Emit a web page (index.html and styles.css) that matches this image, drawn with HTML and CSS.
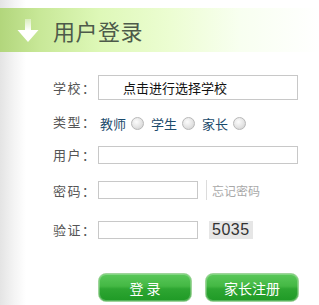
FILE: index.html
```html
<!DOCTYPE html>
<html lang="zh">
<head>
<meta charset="utf-8">
<link rel="stylesheet" href="styles.css">
</head>
<body>
<div class="page">
  <div class="header">
    <svg class="arrow" width="22" height="24" viewBox="0 0 22 24">
      <defs>
        <linearGradient id="ag" x1="0" y1="0" x2="0" y2="1">
          <stop offset="0" stop-color="#ffffff" stop-opacity="0.4"/>
          <stop offset="0.5" stop-color="#ffffff"/>
          <stop offset="1" stop-color="#ffffff"/>
        </linearGradient>
      </defs>
      <path d="M8 0 H14 V11 H21.5 L11 23 L0.5 11 H8 Z" fill="url(#ag)"/>
    </svg>
    <h1 class="title">用户登录</h1>
  </div>
  <div class="form">
    <div class="row row-school">
      <span class="label">学校：</span>
      <div class="input wide school">点击进行选择学校</div>
    </div>
    <div class="row row-type">
      <span class="label">类型：</span>
      <div class="types">
        <span class="opt">教师</span><span class="radio"></span>
        <span class="opt">学生</span><span class="radio"></span>
        <span class="opt">家长</span><span class="radio"></span>
      </div>
    </div>
    <div class="row row-user">
      <span class="label">用户：</span>
      <div class="input wide"></div>
    </div>
    <div class="row row-pass">
      <span class="label">密码：</span>
      <div class="input short"></div>
      <span class="sep"></span>
      <span class="forgot">忘记密码</span>
    </div>
    <div class="row row-code">
      <span class="label">验证：</span>
      <div class="input short"></div>
      <span class="code">5035</span>
    </div>
    <div class="buttons">
      <span class="btn">登 录</span>
      <span class="btn">家长注册</span>
    </div>
  </div>
</div>
</body>
</html>
```

FILE: styles.css
```css
* { box-sizing: border-box; }
html, body { margin: 0; padding: 0; }
body {
  width: 319px;
  height: 305px;
  overflow: hidden;
  font-family: "Noto Sans CJK SC", "Liberation Sans", sans-serif;
  background: #fff;
}
.page {
  height: 305px;
  padding-top: 8px;
  background: linear-gradient(to right, #e4e4e4 0, #f4f4f4 14px, #ffffff 26px);
}
.header {
  height: 44px;
  display: flex;
  align-items: center;
  background: linear-gradient(to right, #b2d67c 0, #c8e898 40px, #def8b8 100px, #ecfdd2 170px, #f8fff0 240px, #ffffff 319px);
}
.arrow {
  margin-left: 17px;
  margin-top: 2px;
  flex: none;
}
.title {
  margin: 0 0 0 14px;
  font-size: 22px;
  font-weight: normal;
  color: #4d5a4a;
  line-height: 1;
  letter-spacing: 0.5px;
}
.form {
  padding-left: 53px;
}
.row {
  display: flex;
  align-items: center;
}
.label {
  width: 45px;
  flex: none;
  font-size: 13px;
  color: #555;
  letter-spacing: 1.5px;
}
.input {
  border: 1px solid #c8c8c8;
  background: #fff;
  height: 18px;
}
.wide { width: 200px; }
.short { width: 100px; }
.row-school { margin-top: 23px; }
.school {
  height: 25px;
  font-size: 13px;
  color: #111;
  padding-left: 24px;
  line-height: 23px;
}
.row-type { margin-top: 9px; height: 24px; }
.types { display: flex; align-items: center; padding-left: 2px; margin-top: 4px; }
.opt { font-size: 13px; color: #1b4b6c; margin-right: 5px; }
.radio {
  width: 13px;
  height: 13px;
  border-radius: 50%;
  border: 1px solid #b8b8b8;
  background: radial-gradient(circle at 40% 35%, #fcfcfc 0, #e6e6e6 50%, #cccccc 100%);
  margin-right: 7px;
}
.row-user { margin-top: 12px; }
.row-pass { margin-top: 16px; }
.sep {
  width: 1px;
  height: 20px;
  background: #dcdcdc;
  margin-left: 8px;
  margin-right: 5px;
}
.forgot { font-size: 12px; color: #a8a8a8; }
.row-code { margin-top: 20px; }
.code {
  margin-left: 11px;
  background: #e6e6e6;
  font-family: "Liberation Sans", sans-serif;
  font-size: 16px;
  color: #333;
  padding: 0 3px;
  line-height: 18px;
  letter-spacing: 0.5px;
}
.buttons {
  display: flex;
  gap: 13px;
  margin-top: 34px;
  margin-left: 45px;
}
.btn {
  width: 94px;
  height: 29px;
  border-radius: 8px;
  border: 1px solid #9fd49a;
  background: linear-gradient(to bottom, #5ac85a 0, #44b844 45%, #2ea632 55%, #1f9a26 100%);
  box-shadow: inset 0 0 0 1px rgba(255,255,255,0.25);
  color: #fff;
  font-size: 14px;
  display: flex;
  align-items: center;
  justify-content: center;
}
```
